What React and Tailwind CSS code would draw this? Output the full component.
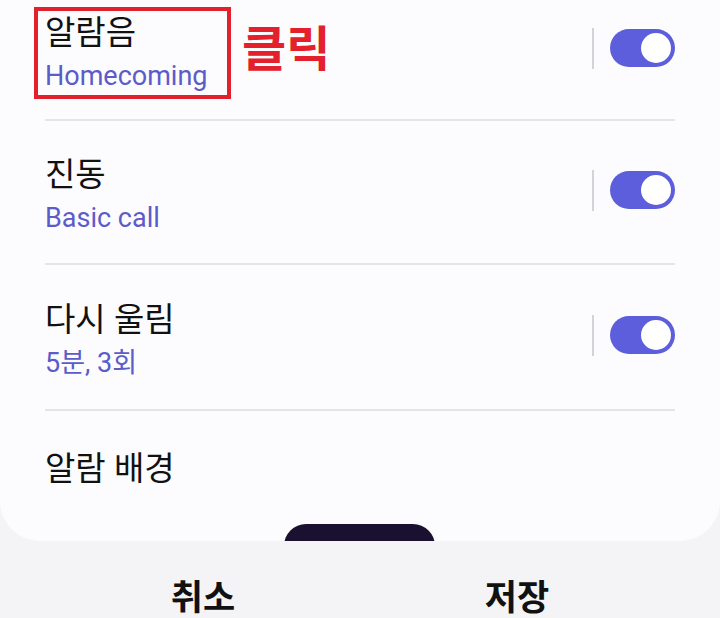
import React from "react";

const font = { fontFamily: 'Roboto, "Noto Sans CJK KR", sans-serif' };

function Toggle() {
  return (
    <div className="flex items-center gap-[16px] mb-[9px]">
      <div className="w-[2px] h-[41px] bg-[#d4d4d8]" />
      <div className="w-[65px] h-[38px] rounded-full bg-[#5c5edb] flex items-center justify-end pr-[4px]">
        <div className="w-[30px] h-[30px] rounded-full bg-white" />
      </div>
    </div>
  );
}

function Row({ title, sub, toggle, pt, pb }) {
  return (
    <div className={`flex items-center justify-between ${pt} ${pb}`}>
      <div className="flex flex-col gap-[5px]">
        <div className="text-[33px] leading-[42px] text-[#111111]">{title}</div>
        {sub && <div className="text-[27px] leading-[34px] text-[#5b5cc9]">{sub}</div>}
      </div>
      {toggle && <Toggle />}
    </div>
  );
}

export default function App() {
  return (
    <div className="w-[720px] h-[618px] bg-[#f4f4f6] flex flex-col overflow-hidden" style={font}>
      <div className="relative h-[541px] shrink-0 bg-[#fcfbfe] rounded-b-[40px] px-[45px]">
        <Row title="알람음" sub="Homecoming" toggle pt="pt-[12px]" pb="pb-[26px]" />
        <div className="h-[2px] bg-[#e4e4e7]" />
        <Row title="진동" sub="Basic call" toggle pt="pt-[33px]" pb="pb-[28px]" />
        <div className="h-[2px] bg-[#e4e4e7]" />
        <Row title="다시 울림" sub="5분, 3회" toggle pt="pt-[34px]" pb="pb-[29px]" />
        <div className="h-[2px] bg-[#e4e4e7]" />
        <Row title="알람 배경" pt="pt-[37px]" pb="pb-0" />

        <div className="absolute left-[34px] top-[7px] w-[197px] h-[92px] border-[4px] border-[#e3202b]" />
        <div className="absolute left-[242px] top-[19px] text-[48px] leading-[62px] font-bold text-[#e3202b]">클릭</div>
        <div className="absolute left-[284px] top-[524px] w-[151px] h-[30px] rounded-t-[22px] bg-[#1a1130]" />
      </div>
      <div className="relative flex-1 bg-[#f4f4f6] flex px-[46px] pt-[35px]">
        <div className="flex-1 text-center text-[35px] leading-[46px] font-bold text-[#111111]">취소</div>
        <div className="flex-1 text-center text-[35px] leading-[46px] font-bold text-[#111111]">저장</div>
      </div>
    </div>
  );
}
